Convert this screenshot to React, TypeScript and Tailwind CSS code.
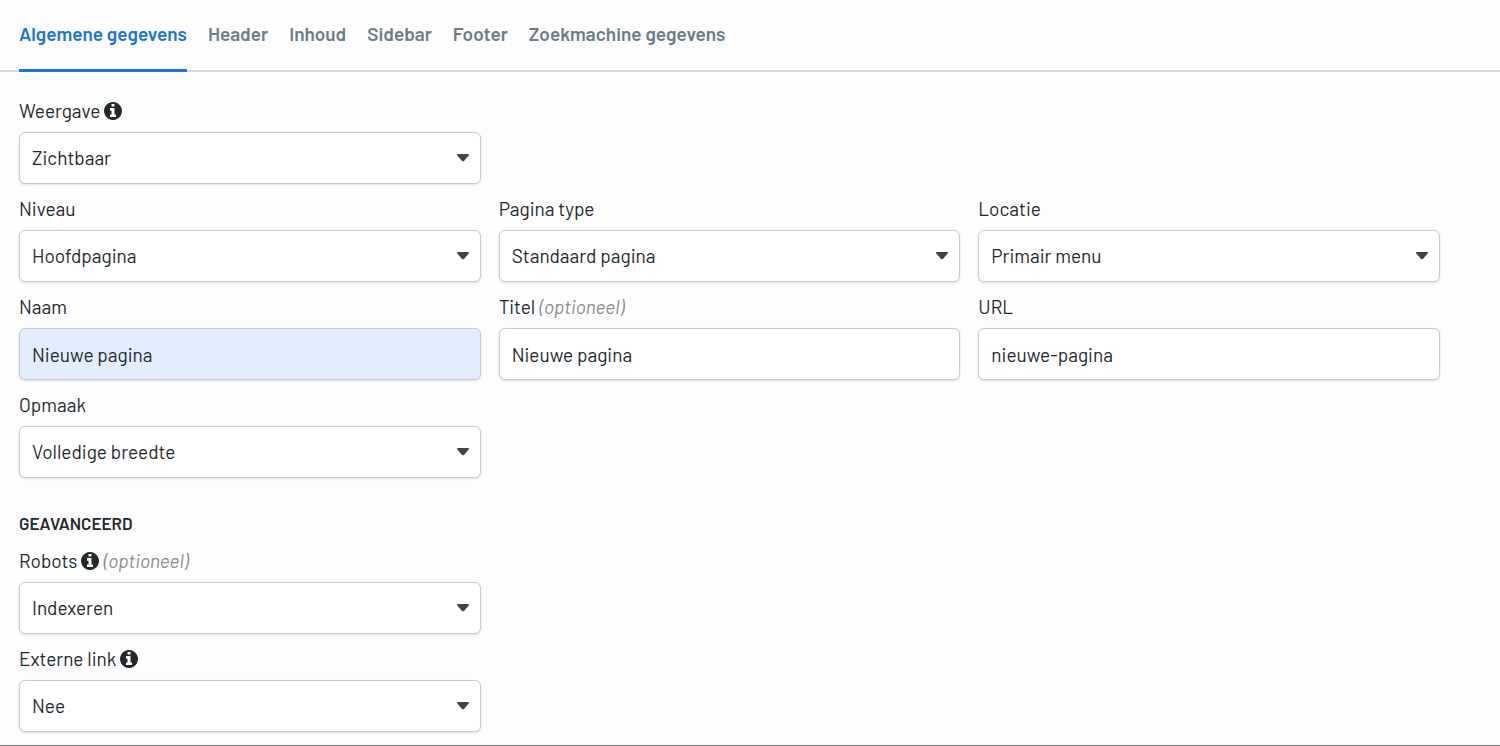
import { useId, useState } from "react";
import type { ReactNode } from "react";
import clsx from "clsx";

const tabs = [
  "Algemene gegevens",
  "Header",
  "Inhoud",
  "Sidebar",
  "Footer",
  "Zoekmachine gegevens",
];

const controlClass =
  "block h-[52px] w-full appearance-none rounded-md border border-[#c3ccd1] px-3 text-[19px] text-[#22292d] shadow-sm outline-none focus:border-[#1c74d4]";

const InfoIcon = () => (
  <svg
    viewBox="0 128 1536 1536"
    className="size-[18px] fill-current"
    aria-hidden="true"
  >
    <path d="M1024 1376v-160q0-14-9-23t-23-9h-96V672q0-14-9-23t-23-9H544q-14 0-23 9t-9 23v160q0 14 9 23t23 9h96v320h-96q-14 0-23 9t-9 23v160q0 14 9 23t23 9h448q14 0 23-9t9-23zM896 480V320q0-14-9-23t-23-9H672q-14 0-23 9t-9 23v160q0 14 9 23t23 9h192q14 0 23-9t9-23zm640 416q0 209-103 385.5T1153.5 1561 768 1664t-385.5-103T103 1281.5 0 896t103-385.5T382.5 231 768 128t385.5 103T1433 510.5 1536 896z" />
  </svg>
);

type FieldProps = {
  label: string;
  info?: boolean;
  optional?: boolean;
  className?: string;
};

const Field = ({
  id,
  label,
  info,
  optional,
  className,
  children,
}: FieldProps & { id: string; children: ReactNode }) => (
  <div className={className}>
    <label
      htmlFor={id}
      className="mb-2 flex items-center gap-1 text-[19px] leading-[26px]"
    >
      {label}
      {info && <InfoIcon />}
      {optional && <em className="text-[#868e93]">(optioneel)</em>}
    </label>
    {children}
  </div>
);

const SelectField = ({
  options,
  ...field
}: FieldProps & { options: string[] }) => {
  const id = useId();

  return (
    <Field id={id} {...field}>
      <div className="relative">
        <select id={id} className={clsx(controlClass, "bg-white pr-10")}>
          {options.map((option) => (
            <option key={option}>{option}</option>
          ))}
        </select>
        <svg
          viewBox="0 0 12 8"
          className="pointer-events-none absolute top-[22px] right-3 h-2 w-3 fill-[#3a474e]"
          aria-hidden="true"
        >
          <path d="M.8 0h10.4c.8 0 1 .9.5 1.4L7 6.9c-.6.6-1.4.6-2 0L.3 1.4C-.2.9 0 0 .8 0z" />
        </svg>
      </div>
    </Field>
  );
};

const TextField = ({
  value,
  filled,
  ...field
}: FieldProps & { value: string; filled?: boolean }) => {
  const id = useId();

  return (
    <Field id={id} {...field}>
      <input
        id={id}
        type="text"
        defaultValue={value}
        className={clsx(controlClass, filled ? "bg-[#e2edfe]" : "bg-white")}
      />
    </Field>
  );
};

export default function App() {
  const [activeTab, setActiveTab] = useState(tabs[0]);

  return (
    <div className="border-b border-[#6b6e70] bg-[#fdfdfd] font-[Barlow,Roboto,sans-serif] text-[#22292d]">
      <nav className="flex gap-[21px] border-b-2 border-[#d3dade] px-[19px]">
        {tabs.map((tab) => (
          <button
            key={tab}
            type="button"
            onClick={() => setActiveTab(tab)}
            className={clsx(
              "-mb-[2px] h-[72px] border-b-3 text-[19px] font-semibold",
              tab === activeTab
                ? "border-[#1c74d4] text-[#1c74d4]"
                : "border-transparent text-[#6c7d87]",
            )}
          >
            {tab}
          </button>
        ))}
      </nav>

      <form className="pt-[26px] pr-[60px] pb-[13px] pl-[19px]">
        <div className="grid grid-cols-3 gap-x-[18px] gap-y-3">
          <SelectField
            label="Weergave"
            info
            options={["Zichtbaar", "Verborgen"]}
          />
          <SelectField
            label="Niveau"
            className="col-start-1"
            options={["Hoofdpagina", "Subpagina"]}
          />
          <SelectField label="Pagina type" options={["Standaard pagina"]} />
          <SelectField label="Locatie" options={["Primair menu"]} />
          <TextField label="Naam" value="Nieuwe pagina" filled />
          <TextField label="Titel" optional value="Nieuwe pagina" />
          <TextField label="URL" value="nieuwe-pagina" />
          <SelectField label="Opmaak" options={["Volledige breedte"]} />
        </div>

        <h2 className="mt-8 mb-3 text-[17px] leading-[26px] font-semibold uppercase">
          Geavanceerd
        </h2>
        <div className="grid grid-cols-3 gap-x-[18px] gap-y-3">
          <SelectField
            label="Robots"
            info
            optional
            options={["Indexeren", "Niet indexeren"]}
          />
          <SelectField
            label="Externe link"
            info
            className="col-start-1"
            options={["Nee", "Ja"]}
          />
        </div>
      </form>
    </div>
  );
}
